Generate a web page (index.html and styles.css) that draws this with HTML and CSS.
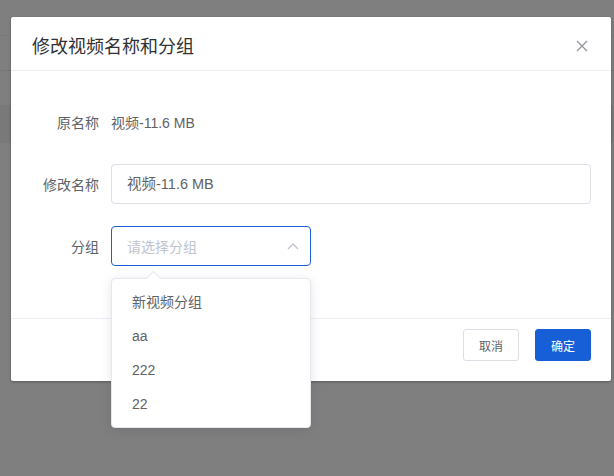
FILE: index.html
```html
<!DOCTYPE html>
<html lang="zh-CN">
<head>
<meta charset="utf-8">
<title>修改视频名称和分组</title>
<link rel="stylesheet" href="styles.css">
</head>
<body>
<div class="backdrop">
  <div class="modal">
    <div class="modal-header">
      <span class="modal-title">修改视频名称和分组</span>
      <button class="close" aria-label="关闭">
        <svg width="12" height="12" viewBox="0 0 12 12"><path d="M1 1L11 11M11 1L1 11" stroke="#909399" stroke-width="1.2" fill="none"/></svg>
      </button>
    </div>
    <div class="modal-body">
      <div class="form-row">
        <label class="form-label">原名称</label>
        <div class="form-value">视频-11.6 MB</div>
      </div>
      <div class="form-row">
        <label class="form-label">修改名称</label>
        <div class="input">视频-11.6 MB</div>
      </div>
      <div class="form-row">
        <label class="form-label">分组</label>
        <div class="select-wrap">
          <div class="select">
            <span class="placeholder">请选择分组</span>
            <svg class="chevron" width="12" height="8" viewBox="0 0 12 8"><path d="M1 7L6 2L11 7" stroke="#c0c4cc" stroke-width="1.3" fill="none"/></svg>
          </div>
          <div class="dropdown">
            <div class="arrow"></div>
            <div class="option">新视频分组</div>
            <div class="option">aa</div>
            <div class="option">222</div>
            <div class="option">22</div>
          </div>
        </div>
      </div>
    </div>
    <div class="modal-footer">
      <button class="btn">取消</button>
      <button class="btn btn-primary">确定</button>
    </div>
  </div>
</div>
</body>
</html>
```

FILE: styles.css
```css
html, body {
  margin: 0;
  padding: 0;
}
body {
  width: 614px;
  height: 476px;
  overflow: hidden;
  font-family: "Liberation Sans", "Noto Sans CJK SC", sans-serif;
  background-color: #7f7f7f;
  background-image:
    linear-gradient(#7a7a7a, #7a7a7a),
    linear-gradient(#777777, #777777),
    linear-gradient(#797979, #797979);
  background-size: 100% 1px, 100% 1px, 100% 38px;
  background-position: 0 35px, 0 70px, 0 105px;
  background-repeat: no-repeat;
}
.backdrop {
  padding: 17px 0 0 11px;
}
.modal {
  width: 600px;
  background: #fff;
  border-radius: 2px;
  box-shadow: 0 1px 3px rgba(0, 0, 0, 0.3);
}
.modal-header {
  display: flex;
  align-items: center;
  justify-content: space-between;
  height: 53px;
  padding: 0 23px 0 21px;
  border-bottom: 1px solid #ebeef5;
}
.modal-title {
  font-size: 18px;
  color: #303133;
  line-height: 24px;
  margin-top: 7px;
}
.close {
  border: 0;
  background: none;
  padding: 0;
  width: 12px;
  height: 12px;
  display: flex;
  margin-top: 4px;
}
.modal-body {
  padding: 31px 20px 9px 0;
}
.form-row {
  display: flex;
  align-items: center;
  height: 40px;
  margin-bottom: 22px;
}
.form-row:last-child {
  margin-bottom: 43px;
}
.form-label {
  width: 88px;
  padding-right: 12px;
  text-align: right;
  font-size: 14px;
  color: #606266;
}
.form-value {
  font-size: 14px;
  color: #606266;
}
.input {
  flex: 1;
  height: 38px;
  line-height: 38px;
  border: 1px solid #dcdfe6;
  border-radius: 4px;
  padding: 0 15px;
  font-size: 14.5px;
  color: #606266;
}
.select-wrap {
  position: relative;
  width: 200px;
}
.select {
  height: 38px;
  border: 1px solid #1a5fd8;
  border-radius: 4px;
  padding: 0 11px 0 15px;
  display: flex;
  align-items: center;
  justify-content: space-between;
}
.placeholder {
  font-size: 14px;
  color: #c0c4cc;
}
.chevron {
  display: block;
}
.dropdown {
  position: absolute;
  left: 0;
  top: 52px;
  width: 198px;
  padding: 6px 0;
  background: #fff;
  border: 1px solid #e4e7ed;
  border-radius: 4px;
  box-shadow: 0 2px 12px rgba(0, 0, 0, 0.1);
  z-index: 10;
}
.arrow {
  position: absolute;
  top: -6px;
  left: 36px;
  width: 10px;
  height: 10px;
  background: #fff;
  border-left: 1px solid #e4e7ed;
  border-top: 1px solid #e4e7ed;
  transform: rotate(45deg);
}
.option {
  height: 34px;
  line-height: 34px;
  padding: 0 20px;
  font-size: 14px;
  color: #606266;
}
.modal-footer {
  display: flex;
  justify-content: flex-end;
  gap: 16px;
  padding: 10px 20px 20px;
  border-top: 1px solid #ebeef5;
}
.btn {
  width: 56px;
  height: 32px;
  padding: 0;
  font-family: inherit;
  font-size: 12px;
  color: #606266;
  background: #fff;
  border: 1px solid #dcdfe6;
  border-radius: 3px;
}
.btn-primary {
  background: #175fd7;
  border-color: #175fd7;
  color: #fff;
}
```
